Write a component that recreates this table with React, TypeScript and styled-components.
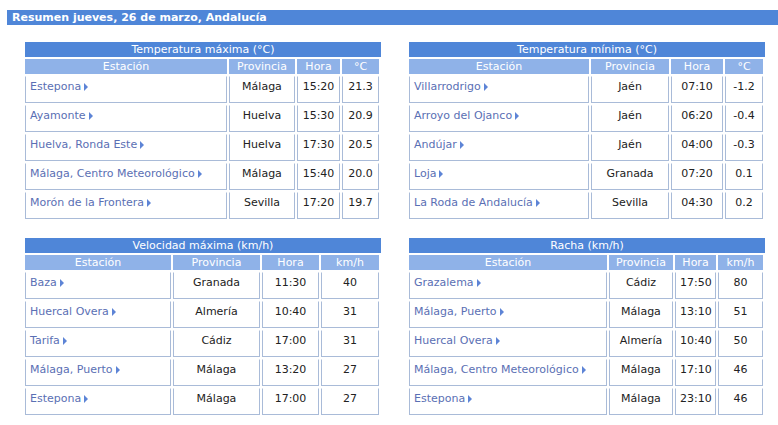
import React from 'react';
import styled, { createGlobalStyle } from 'styled-components';

type Row = [string, string, string, string];

interface PanelData {
  title: string;
  unit: string;
  widths: number[];
  rows: Row[];
}

const panels: PanelData[] = [
  {
    title: 'Temperatura máxima (°C)',
    unit: '°C',
    widths: [202, 66, 43, 37],
    rows: [
      ['Estepona', 'Málaga', '15:20', '21.3'],
      ['Ayamonte', 'Huelva', '15:30', '20.9'],
      ['Huelva, Ronda Este', 'Huelva', '17:30', '20.5'],
      ['Málaga, Centro Meteorológico', 'Málaga', '15:40', '20.0'],
      ['Morón de la Frontera', 'Sevilla', '17:20', '19.7'],
    ],
  },
  {
    title: 'Temperatura mínima (°C)',
    unit: '°C',
    widths: [180, 78, 52, 38],
    rows: [
      ['Villarrodrigo', 'Jaén', '07:10', '-1.2'],
      ['Arroyo del Ojanco', 'Jaén', '06:20', '-0.4'],
      ['Andújar', 'Jaén', '04:00', '-0.3'],
      ['Loja', 'Granada', '07:20', '0.1'],
      ['La Roda de Andalucía', 'Sevilla', '04:30', '0.2'],
    ],
  },
  {
    title: 'Velocidad máxima (km/h)',
    unit: 'km/h',
    widths: [146, 87, 57, 58],
    rows: [
      ['Baza', 'Granada', '11:30', '40'],
      ['Huercal Overa', 'Almería', '10:40', '31'],
      ['Tarifa', 'Cádiz', '17:00', '31'],
      ['Málaga, Puerto', 'Málaga', '13:20', '27'],
      ['Estepona', 'Málaga', '17:00', '27'],
    ],
  },
  {
    title: 'Racha (km/h)',
    unit: 'km/h',
    widths: [198, 64, 41, 45],
    rows: [
      ['Grazalema', 'Cádiz', '17:50', '80'],
      ['Málaga, Puerto', 'Málaga', '13:10', '51'],
      ['Huercal Overa', 'Almería', '10:40', '50'],
      ['Málaga, Centro Meteorológico', 'Málaga', '17:10', '46'],
      ['Estepona', 'Málaga', '23:10', '46'],
    ],
  },
];

const GlobalStyle = createGlobalStyle`
  body {
    margin: 0;
    background: #fff;
    font-family: "DejaVu Sans", Verdana, sans-serif;
    font-size: 11px;
  }
`;

const Page = styled.div`
  padding-top: 10px;
`;

const TitleBar = styled.h1`
  margin: 0 0 0 7px;
  height: 15px;
  padding-left: 5px;
  background: #4f86d8;
  color: #fff;
  font-size: 11px;
  font-weight: bold;
  line-height: 15px;
  white-space: nowrap;
`;

const Grid = styled.div`
  display: grid;
  grid-template-columns: 356px 356px;
  column-gap: 28px;
  row-gap: 17px;
  padding: 17px 0 0 25px;
`;

const Panel = styled.section`
  width: 356px;
`;

const Caption = styled.div`
  height: 15px;
  background: #4f86d8;
  color: #fff;
  text-align: center;
  line-height: 15px;
`;

const Table = styled.table`
  width: 358px;
  margin-left: -2px;
  border-collapse: separate;
  border-spacing: 2px;
  table-layout: fixed;
`;

const Th = styled.th`
  height: 15px;
  padding: 0;
  background: #8fb2e8;
  color: #fff;
  font-weight: normal;
  line-height: 15px;
  text-align: center;
`;

const Td = styled.td<{ $left?: boolean }>`
  box-sizing: border-box;
  height: 27px;
  padding: 3px 4px 0;
  border: 1px solid #a9bbd8;
  border-top-color: #fff;
  vertical-align: top;
  line-height: 13px;
  color: #222;
  text-align: ${(p) => (p.$left ? 'left' : 'center')};
  white-space: nowrap;
`;

const StationLink = styled.a`
  color: #5a6fb4;
  text-decoration: none;
`;

const Arrow = styled.span`
  display: inline-block;
  width: 0;
  height: 0;
  margin-left: 3px;
  border-left: 4px solid #5d84d6;
  border-top: 4px solid transparent;
  border-bottom: 4px solid transparent;
  vertical-align: -1px;
`;

const SummaryTable = ({ data }: { data: PanelData }) => (
  <Panel>
    <Caption>{data.title}</Caption>
    <Table>
      <colgroup>
        {data.widths.map((w, i) => (
          <col key={i} style={{ width: w }} />
        ))}
      </colgroup>
      <thead>
        <tr>
          <Th>Estación</Th>
          <Th>Provincia</Th>
          <Th>Hora</Th>
          <Th>{data.unit}</Th>
        </tr>
      </thead>
      <tbody>
        {data.rows.map((r, i) => (
          <tr key={i}>
            <Td $left>
              <StationLink href="#">
                {r[0]}
                <Arrow />
              </StationLink>
            </Td>
            <Td>{r[1]}</Td>
            <Td>{r[2]}</Td>
            <Td>{r[3]}</Td>
          </tr>
        ))}
      </tbody>
    </Table>
  </Panel>
);

export default function App() {
  return (
    <Page>
      <GlobalStyle />
      <TitleBar>Resumen jueves, 26 de marzo, Andalucía</TitleBar>
      <Grid>
        {panels.map((p) => (
          <SummaryTable key={p.title} data={p} />
        ))}
      </Grid>
    </Page>
  );
}
